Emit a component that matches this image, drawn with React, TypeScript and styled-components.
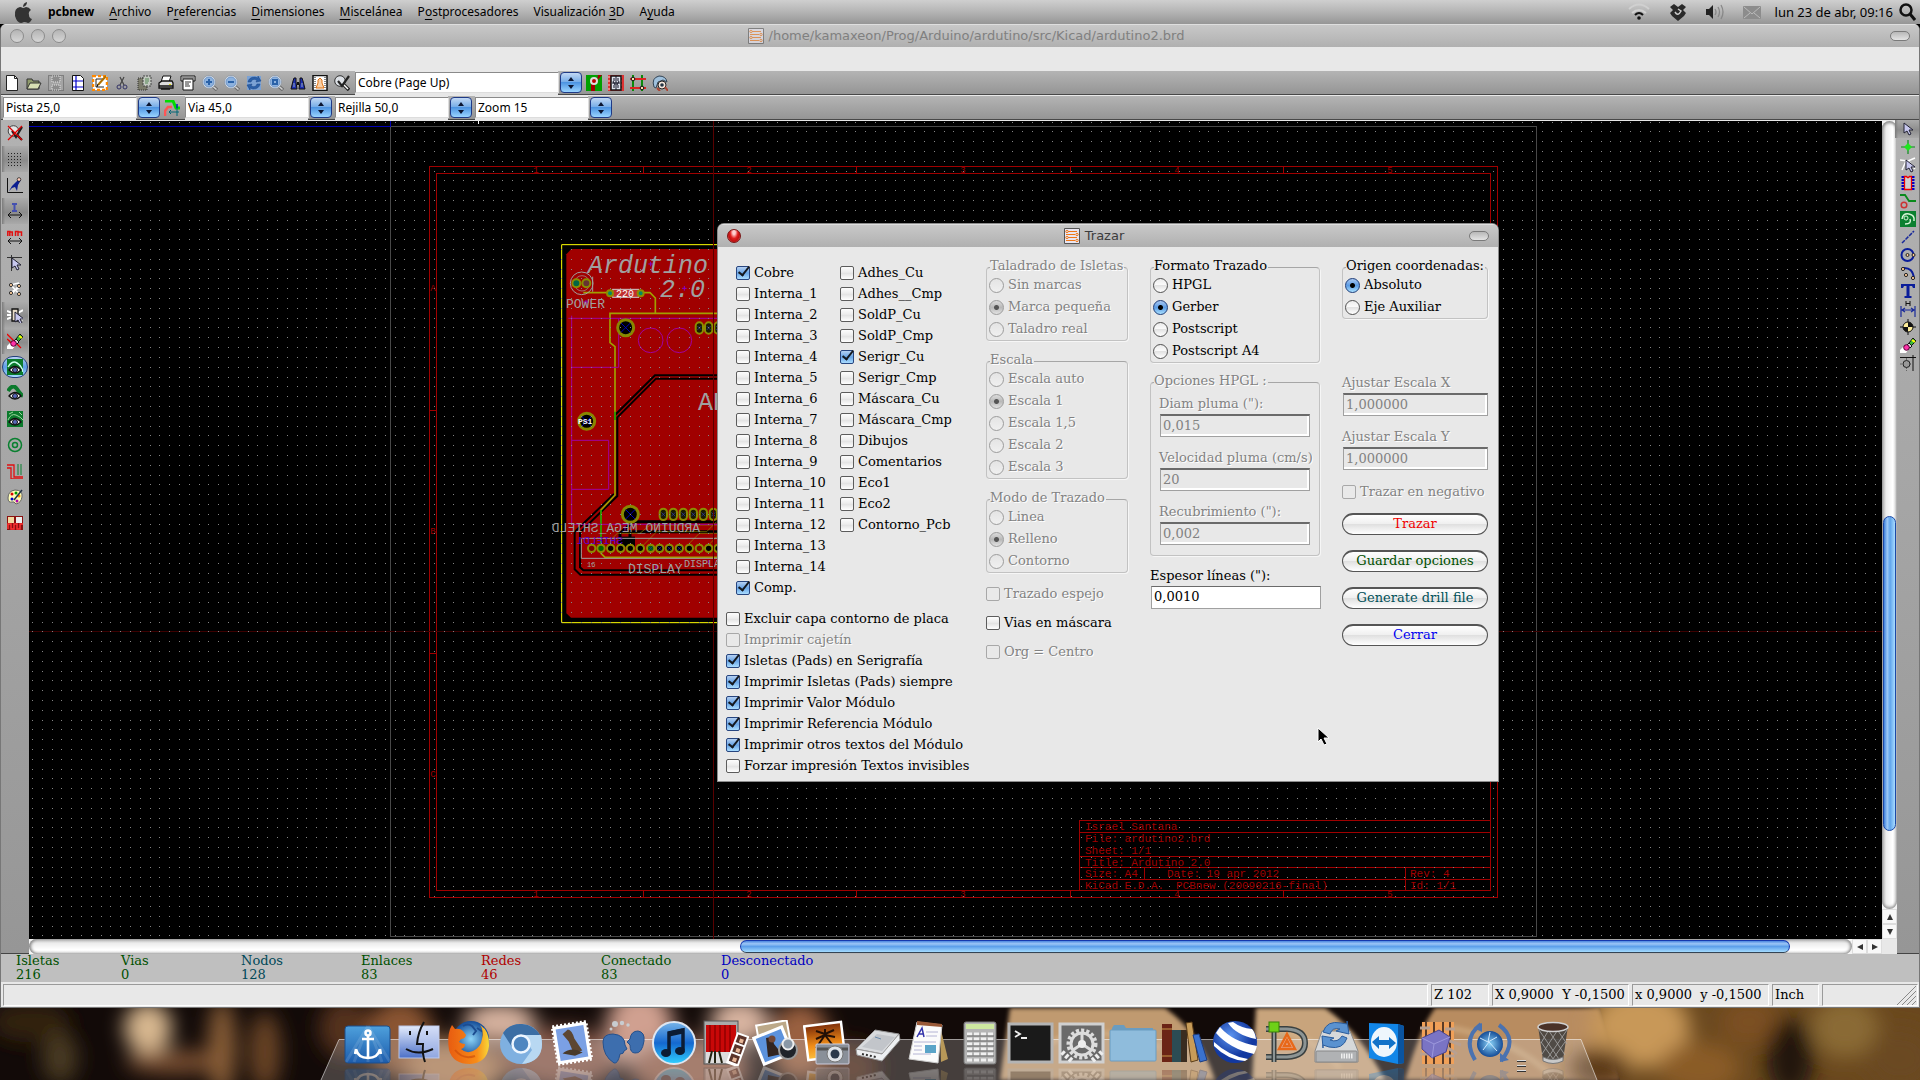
import React from "react";
import styled, { createGlobalStyle, css } from "styled-components";

const sans = `"Noto Sans", "Open Sans", sans-serif`;
const serif = `"DejaVu Serif", "Liberation Serif", serif`;
const mono = `"Liberation Mono", "DejaVu Sans Mono", monospace`;

const GlobalStyle = createGlobalStyle`
  *, *::before, *::after { box-sizing: border-box; }
  body { margin: 0; background: #000; overflow: hidden; }
  button, input, select { font: inherit; color: inherit; margin: 0; }
`;

/* ---------- shell ---------- */

const Desktop = styled.div`
  position: relative;
  display: flex;
  flex-direction: column;
  height: 100vh;
  font: 13px/18px ${sans};
  color: #000;
  overflow: hidden;
`;

const MenuBar = styled.header`
  display: flex;
  align-items: center;
  height: 24px;
  padding: 0 4px 0 13px;
  background: linear-gradient(#cfcfcf, #b4b4b4 50%, #969696);
  font-size: 13px;
`;

const Menus = styled.nav`
  display: flex;
  align-items: center;
  gap: 15px;
  flex: 1;
  margin-left: 15px;
`;

const MenuItem = styled.button<{ $bold?: boolean }>`
  border: 0;
  padding: 0;
  background: none;
  line-height: 20px;
  font-size: 12px;
  font-weight: ${(p) => (p.$bold ? 700 : 400)};
  u { text-underline-offset: 3px; }
`;

const Tray = styled.div`
  display: flex;
  align-items: center;
  gap: 19px;
  line-height: 20px;
`;

const Clock = styled.span`
  margin: 0 -13px 0 -5px;
  font-size: 13px;
`;

const AppWindow = styled.main`
  display: flex;
  flex-direction: column;
  flex: 1;
  min-height: 0;
  background: #e8e8e8;
  border: solid #777;
  border-width: 0 1px 1px;
  border-radius: 6px 6px 0 0;
  overflow: hidden;
`;

const TitleBar = styled.div<{ $active?: boolean }>`
  display: flex;
  align-items: center;
  height: 23px;
  padding: 0 9px;
  border-top: 1px solid #dedede;
  background: linear-gradient(#c8c8c8, #b0b0b0);
  color: ${(p) => (p.$active ? "#3c3c3c" : "#808080")};
`;

const TitleText = styled.h1`
  display: flex;
  align-items: center;
  justify-content: center;
  gap: 5px;
  flex: 1;
  margin: 0;
  font: 13px/18px "DejaVu Sans", sans-serif;
`;

const Lights = styled.div<{ $w: number }>`
  display: flex;
  gap: 7px;
  width: ${(p) => p.$w}px;
`;

const Light = styled.button<{ $red?: boolean }>`
  width: 14px;
  height: 14px;
  padding: 0;
  border: 1px solid ${(p) => (p.$red ? "#7a1414" : "#8c8c8c")};
  border-radius: 50%;
  background: ${(p) =>
    p.$red
      ? "radial-gradient(ellipse at 50% 20%, #ffd0d0 0 15%, #e02020 45%, #c01010 65%, #ff8a8a)"
      : "linear-gradient(#b4b4b4, #d6d6d6)"};
`;

const PillBox = styled.div`
  display: flex;
  justify-content: flex-end;
  width: 60px;
`;

const Pill = styled.button`
  width: 20px;
  height: 10px;
  padding: 0;
  border: 1px solid #7a7a7a;
  border-radius: 5px;
  background: linear-gradient(#b8b8b8, #e4e4e4);
`;

const Strip = styled.div`
  height: 24px;
`;

const ToolRow = styled.div`
  display: flex;
  align-items: center;
  height: 24px;
  background: linear-gradient(#b4b4b4, #959595);
  border-bottom: 1px solid #484848;
  & + & { margin-top: 1px; }
`;

const ToolButton = styled.button`
  display: flex;
  align-items: center;
  justify-content: center;
  width: 22px;
  height: 22px;
  padding: 0;
  border: 0;
  background: none;
`;

const ComboWrap = styled.label<{ $w: number }>`
  display: flex;
  align-items: center;
  width: ${(p) => p.$w}px;
  height: 24px;
  margin-left: 2px;
  background: linear-gradient(to right, #e8e8e8 calc(100% - 25px), transparent 0);
`;

const ComboSelect = styled.select`
  flex: 1;
  min-width: 0;
  height: 21px;
  padding: 0 2px;
  appearance: none;
  border: 1px solid #8a8a8a;
  border-right-color: #ddd;
  border-bottom-color: #ddd;
  border-radius: 0;
  background: #fff;
  font-size: 12px;
`;

const Stepper = styled.span`
  display: flex;
  align-items: center;
  justify-content: center;
  width: 22px;
  height: 21px;
  margin: 0 1px;
  border: 1px solid #1f3a86;
  border-radius: 4px;
  background: linear-gradient(#c2d8f4, #79aee8 45%, #4d94e2 50%, #9ad4ff);
`;

const Workspace = styled.div`
  display: flex;
  flex: 1;
  min-height: 0;
`;

const SideBar = styled.aside<{ $w: number }>`
  display: flex;
  flex-direction: column;
  align-items: center;
  width: ${(p) => p.$w}px;
  background: linear-gradient(#b2b2b2, #969696);
  border-bottom: 1px solid #444;
`;

const SideButton = styled.button<{ $h: number; $state?: "down" | "blue" }>`
  display: flex;
  align-items: center;
  justify-content: center;
  flex: none;
  width: 26px;
  height: ${(p) => p.$h}px;
  padding: 0;
  border: 0;
  background: none;
  ${(p) =>
    p.$state === "down" &&
    css`
      background: linear-gradient(to right, #7c7c7c, transparent 12%),
        linear-gradient(#ababab, #8c8c8c 55%, #a9a9a9);
    `}
  ${(p) =>
    p.$state === "blue" &&
    css`
      height: 22px;
      margin: 2px 0;
      border: 1px solid #24407c;
      border-radius: 11px;
      background: linear-gradient(#b9d4f5, #5c9ee6 50%, #a5dcff);
    `}
`;

const Center = styled.section`
  display: flex;
  flex-direction: column;
  flex: 1;
  min-width: 0;
  padding-top: 1px;
`;

const Row = styled.div<{ $grow?: boolean }>`
  display: flex;
  flex: ${(p) => (p.$grow ? 1 : "none")};
  min-height: 0;
`;

const Canvas = styled.div`
  display: flex;
  flex: 1;
  min-width: 0;
  background: #000;
  overflow: hidden;
  svg { flex: 1; min-width: 0; display: block; }
`;

const VBar = styled.div`
  display: flex;
  flex-direction: column;
  width: 15px;
  background: #f4f4f4;
`;

const VTrack = styled.div`
  display: grid;
  grid-template-rows: 394fr 315fr 78fr;
  flex: 1;
  padding: 0 1px;
  border-radius: 8px;
  background: linear-gradient(to right, #b8b8b8, #ededed 30%, #fff 70%, #ddd);
  box-shadow: inset 0 2px 3px #888, inset 0 -2px 3px #999;
`;

const VThumb = styled.div`
  grid-row: 2;
  border: 1px solid #1b49a8;
  border-radius: 7px;
  background: linear-gradient(to right, #3d7fdc, #9cc9f8 30%, #5fa4ec 55%, #a8dcff);
`;

const HBar = styled.div`
  display: flex;
  flex: 1;
  height: 15px;
  background: #f4f4f4;
`;

const HTrack = styled.div`
  display: grid;
  grid-template-columns: 710fr 1049fr 62fr;
  flex: 1;
  padding: 1px 0;
  border-radius: 8px;
  background: linear-gradient(#c2c2c2, #ededed 30%, #fff 70%, #eee);
  box-shadow: inset 2px 0 3px #888, inset -2px 0 3px #999;
`;

const HThumb = styled.div`
  grid-column: 2;
  border: 1px solid #1639ae;
  border-bottom-color: #345;
  border-radius: 7px;
  background: linear-gradient(#4b86e0, #9cc6f6 25%, #5d9fea 50%, #a3dbff);
`;

const ArrowButton = styled.button`
  display: flex;
  align-items: center;
  justify-content: center;
  width: 15px;
  height: 15px;
  padding: 0;
  border: 1px solid #ddd;
  background: #f8f8f8;
`;

const Corner = styled.div`
  width: 15px;
  background: #e8e8e8;
`;

const Stats = styled.dl`
  display: grid;
  grid-template-columns: 105px repeat(6, 120px);
  height: 28px;
  margin: 0;
  padding-left: 15px;
  background: #bfbfbf;
  font: 13px/14px ${serif};
`;

const Stat = styled.div<{ $c: string }>`
  color: ${(p) => p.$c};
  dt, dd { margin: 0; }
`;

const StatusBar = styled.footer`
  display: flex;
  gap: 3px;
  height: 25px;
  padding: 2px 1px 1px 2px;
  font: 13px/20px ${serif};
`;

const StatusField = styled.div<{ $w?: number }>`
  display: flex;
  justify-content: space-between;
  ${(p) => (p.$w ? `width: ${p.$w}px;` : "flex: 1;")}
  padding-left: 2px;
  border: 1px solid #9a9a9a;
  border-right-color: #fff;
  border-bottom-color: #fff;
  white-space: pre;
`;

/* ---------- dialog ---------- */

const Dialog = styled.section`
  position: absolute;
  left: 718px;
  top: 224px;
  width: 780px;
  background: #e8e8e8;
  border-radius: 6px 6px 0 0;
  overflow: hidden;
  box-shadow: 0 0 0 1px #8c8c8c;
  font: 13px/18px ${serif};
`;

const DialogBody = styled.form`
  display: grid;
  grid-template-columns: 260px 164px 192px 146px;
  padding: 13px 0 5px 8px;
`;

const Column = styled.div<{ $top?: number }>`
  padding-top: ${(p) => p.$top ?? 0}px;
`;

const Layers = styled.div`
  display: grid;
  grid-template-columns: 104px 1fr;
  padding-left: 10px;
  margin-bottom: 10px;
`;

const Option = styled.label<{ $off?: boolean; $h: number }>`
  display: flex;
  align-items: center;
  gap: 4px;
  height: ${(p) => p.$h}px;
  white-space: nowrap;
  ${(p) => p.$off && "color: #828282; text-shadow: 1px 1px 0 #fff;"}
`;

const Check = styled.input`
  position: relative;
  flex: none;
  appearance: none;
  width: 14px;
  height: 14px;
  border: 1px solid #5c5c5c;
  border-radius: 2px;
  background: linear-gradient(#fdfdfd, #ececec 45%, #e2e2e2 50%, #fff);
  &:disabled { border-color: #a8a8a8; background: #e9e9e9; }
  &:checked {
    border-color: #27457f;
    background: linear-gradient(#b5d0f2, #68a4e6 50%, #a9dcff);
  }
  &:checked::after {
    content: "";
    position: absolute;
    left: 4px;
    top: -3px;
    width: 6px;
    height: 12px;
    border: solid #14181f;
    border-width: 0 2px 2px 0;
    transform: rotate(38deg);
  }
`;

const Radio = styled.input`
  flex: none;
  appearance: none;
  width: 15px;
  height: 15px;
  border: 1px solid #505050;
  border-radius: 50%;
  background: linear-gradient(#ececec, #fafafa 45%, #e2e2e2 50%, #fff);
  &:checked {
    border-color: #1d3c78;
    background: radial-gradient(circle, #000 0 2px, transparent 3px),
      linear-gradient(#a9c8f2, #5c9ce4 50%, #a9e0ff);
  }
  &:disabled { border-color: #9c9c9c; background: linear-gradient(#e4e4e4, #f0f0f0); }
  &:disabled:checked {
    background: radial-gradient(circle, #555 0 2px, transparent 3px),
      linear-gradient(#dcdcdc, #b8b8b8 50%, #e2e2e2);
  }
`;

const Group = styled.fieldset<{ $w: number; $off?: boolean; $gap?: number }>`
  min-width: 0;
  width: ${(p) => p.$w}px;
  margin: 0 0 ${(p) => p.$gap ?? 12}px;
  padding: 0 0 0 2px;
  border: 1px solid #c2c2c2;
  border-top-color: #a6a6a6;
  border-radius: 4px;
  box-shadow: 1px 1px 0 #f6f6f6;
  legend {
    margin-left: 1px;
    padding: 0 1px 2px 0;
    line-height: 12px;
    white-space: nowrap;
    ${(p) => p.$off && "color: #828282; text-shadow: 1px 1px 0 #fff;"}
  }
`;

const FieldStack = styled.div<{ $pad?: boolean }>`
  display: flex;
  flex-direction: column;
  gap: 12px;
  ${(p) => p.$pad && "padding: 6px 0 10px 6px;"}
`;

const Field = styled.label<{ $off?: boolean; $w: number }>`
  display: flex;
  flex-direction: column;
  gap: 1px;
  white-space: nowrap;
  ${(p) => p.$off && "color: #828282; text-shadow: 1px 1px 0 #fff;"}
  input {
    width: ${(p) => p.$w}px;
    height: 23px;
    margin-left: 1px;
    padding: 0 2px 2px;
    border: 1px solid #a0a0a0;
    border-top-color: #6a6a6a;
    border-radius: 0;
    background: #fff;
  }
  input:disabled {
    color: #828282;
    background: #e8e8e8;
    border-top-width: 2px;
    box-shadow: inset -2px -2px 0 #fff;
  }
`;

const Actions = styled.div`
  display: flex;
  flex-direction: column;
  gap: 15px;
  margin-top: 11px;
`;

const Push = styled.button<{ $c: string }>`
  height: 22px;
  padding: 0 0 2px;
  border: 1px solid #555;
  border-top-width: 2px;
  border-radius: 11px;
  background: linear-gradient(#fff, #f0f0f0 45%, #e0e0e0 50%, #fff);
  color: ${(p) => p.$c};
  line-height: 16px;
`;

const Pointer = styled.svg`
  position: absolute;
  left: 1317px;
  top: 727px;
  width: 13px;
  height: 20px;
`;

/* ---------- dock ---------- */

const DockArea = styled.div`
  display: grid;
  height: 72px;
  overflow: hidden;
  > * { grid-area: 1 / 1; }
`;

const Scene = styled.svg`
  display: block;
  width: 100%;
  height: 72px;
`;

const DockRow = styled.div`
  display: flex;
  justify-content: center;
  gap: 3px;
  padding-top: 12px;
  z-index: 1;
`;

const DockItem = styled.button`
  width: 48px;
  height: 46px;
  padding: 0;
  border: 0;
  background: none;
  -webkit-box-reflect: below 0 linear-gradient(transparent, rgba(0, 0, 0, 0.35));
  svg { display: block; }
`;

const DockGap = styled.div`
  width: 9px;
  padding-top: 40px;
  display: flex;
  flex-direction: column;
  gap: 4px;
  i { height: 1px; background: #ddd; box-shadow: 0 1px #333; }
`;

/* ---------- icons ---------- */

const Ic = ({ children, s = 16 }: { children: React.ReactNode; s?: number }) => (
  <svg width={s} height={s} viewBox="0 0 16 16" fill="none" aria-hidden="true">{children}</svg>
);

const Magnifier = ({ sign }: { sign: string }) => (
  <Ic>
    <path d="M10.500 11l4.500 4" stroke="#6c6c6c" strokeWidth="3.500" />
    <path d="M10.500 11l4 3.500" stroke="#d4d4d4" strokeWidth="1.500" />
    <circle cx="7" cy="7" r="6.500" fill="#dfe6ee" stroke="#8b95a1" strokeWidth=".8" />
    <circle cx="7" cy="7" r="5" fill="#8db2de" stroke="#6c94c8" />
    <path d={sign} stroke="#2a62a8" strokeWidth="2" />
  </Ic>
);

const Eye = () => (
  <>
    <path d="M2 11q6-7 12 0q-6 6-12 0z" fill="#fff" stroke="#111" strokeWidth="1.300" />
    <circle cx="8" cy="11" r="2.500" fill="#5a68b8" stroke="#111" />
  </>
);

const Eraser = () => (
  <>
    <path d="M0 16v-3l3-3h3l2 3-2 3z" fill="#fff" />
    <path d="M9 6l4-5 3 3-5 5z" fill="#38b838" stroke="#111" />
    <path d="M12 3l3 2" stroke="#ff0" strokeWidth="2" />
    <path d="M7 8l2-2 3 3-2 2z" fill="#ddd" stroke="#111" />
    <circle cx="6.500" cy="10.500" r="2.800" fill="#f3a" stroke="#503" />
  </>
);

const Arrow = ({ x = 0, y = 0 }) => (
  <path transform={`translate(${x} ${y})`} d="M0 0v10l3-2 2 4 2-1-2-4h4z" fill="#c8c8ee" stroke="#223" strokeWidth="1" />
);

const mainIcons: [string, React.ReactNode][] = [
  ["Nuevo", <Ic><path d="M2.500.5h8l3 3v12h-11z" fill="#fff" stroke="#222" /><path d="M10.500.5v3h3" stroke="#222" /></Ic>],
  ["Abrir", <Ic><path d="M1 4h5l1 2h6v8H1z" fill="#8f9a6c" stroke="#333" /><path d="M1 14l3-6h11l-3 6z" fill="#d9e0b4" stroke="#333" /></Ic>],
  ["Guardar", <Ic><path d="M.5.5h15v15H.5z" fill="#a4a4a4" stroke="#555" strokeDasharray="1 1" /><path d="M4 1h8v6H4zM4 10h8v5H4z" fill="#8c8c8c" stroke="#e4e4e4" strokeDasharray="1 1" /></Ic>],
  ["Ajustes de página", <Ic><path d="M2.500.5h8l3 3v12h-11z" fill="#fff" stroke="#111" /><path d="M6 1v14M3 6h10M3 12h10" stroke="#00c" strokeWidth="1.200" /></Ic>],
  ["Editor de módulos", <Ic><path d="M1 1h14v14H1z" fill="#fff" stroke="#f80" strokeWidth="2.500" strokeDasharray="3 2" /><path d="M4 4h7M4 4v8h8" stroke="#222" /><path d="M6 10l8-9" stroke="#b07000" strokeWidth="2" /><path d="M5 12l1-3" stroke="#111" /></Ic>],
  ["Cortar", <Ic><path d="M6 2l4 8M10 2L6 10" stroke="#444" strokeWidth="1.200" /><circle cx="5" cy="12" r="2" stroke="#336" /><circle cx="11" cy="12" r="2" stroke="#336" /></Ic>],
  ["Pegar", <Ic><path d="M2 3h9v12H2z" fill="#7b7b6b" stroke="#333" strokeDasharray="1 1" /><path d="M7 1h8v10H7z" fill="#c2c8c0" stroke="#444" strokeDasharray="2 1" /><path d="M9 4h4M9 6h4M9 8h3" stroke="#585" /></Ic>],
  ["Imprimir", <Ic><path d="M5 1h8l-2 6H3z" fill="#fff" stroke="#111" /><path d="M1 8l3-2h10l1 2v5H1z" fill="#ddd" stroke="#111" strokeWidth="1.300" /><path d="M1 11h14M3 14h9" stroke="#111" strokeWidth="1.500" /><path d="M11 9.500h2" stroke="#dd0" /></Ic>],
  ["Trazar", <Ic><path d="M1 1h14v5H1z" fill="#eee" stroke="#111" /><path d="M3 4h10v11H3z" fill="#fff" stroke="#111" /><path d="M5 7h6M5 9h4M5 11h5M2 3h12" stroke="#333" /></Ic>],
  ["Acercar", <Magnifier sign="M7 4v6M4 7h6" />],
  ["Alejar", <Magnifier sign="M4 7h6" />],
  ["Redibujar", <Ic><path d="M1 1h14v14H1z" fill="#7ba2d4" /><path d="M2 7q1-5 7-5l3 1V1l3 5-5 1 1-2q-5-2-6 2zM14 9q-1 5-7 5l-3-1v2L1 10l5-1-1 2q5 2 6-2z" fill="#2b60a8" stroke="#1b4484" strokeWidth=".5" /></Ic>],
  ["Ajustar zoom", <Magnifier sign="M5 5h4v4H5z" />],
  ["Buscar", <Ic><path d="M4 3h2v4l1 7H1l2-8zM10 3h2l1 3 2 8H9l1-7z" fill="#1d2fb0" stroke="#111" /><path d="M7 7h2v3H7z" fill="#111" /><path d="M4 8v4M12 8v4" stroke="#9ab" /></Ic>],
  ["Netlist", <Ic><path d="M1 .5h14v15H1z" fill="#fff" stroke="#111" strokeWidth="1.500" /><path d="M3 2v12M13 2v12" stroke="#111" strokeDasharray="1 1" /><path d="M8 3l2 2v3l2 5H4l2-5V5z" fill="#f8d0a8" stroke="#e07010" /></Ic>],
  ["DRC", <Ic><circle cx="6" cy="6" r="5.300" fill="#dde1e6" stroke="#333" /><path d="M10 10l5 5" stroke="#222" strokeWidth="3.500" /><path d="M10 10l4 4" stroke="#fff" strokeWidth="1.500" /><path d="M4 6l4 5 7-10" stroke="#222" strokeWidth="2.200" /></Ic>],
];

const modeIcons: [string, React.ReactNode][] = [
  ["Modo pista", <Ic><path d="M0 0h16v16H0z" fill="#00a000" /><path d="M5 9h4v7H5zM12 0h4l-5 6z" fill="#a00000" /><circle cx="8" cy="6" r="3" fill="#b00" stroke="#ddd" strokeWidth="2" /></Ic>],
  ["Modo módulo", <Ic><path d="M0 0h16v16H0z" fill="#d33" /><path d="M0 2h16M0 6h16M0 10h16M0 14h16" stroke="#fcc" strokeDasharray="2 2" /><path d="M3 1h10v14H3z" fill="#dfe3ee" stroke="#111" strokeWidth="1.500" /><path d="M8 1v14M4 8h8M6 3v3M10 3v3M6 10v3M10 10v3M5 6l2 4M11 6l-2 4" stroke="#112" /></Ic>],
  ["Autorutado", <Ic><path d="M3 0v16M12 0v16" stroke="#0a8a0a" strokeWidth="2" /><path d="M0 4h16M0 13h16" stroke="#d22" strokeWidth="2" /><circle cx="3" cy="4" r="1.800" fill="#fda" stroke="#111" /><circle cx="12" cy="13" r="1.800" fill="#fda" stroke="#111" /></Ic>],
  ["Ayuda en red", <Ic><path d="M2 12Q-1 3 7 1q7 0 8 6l-4-2-5 2-2 6z" fill="#9fc0dc" stroke="#345" /><circle cx="10" cy="10" r="4" fill="#f4e6dc" stroke="#222" /><circle cx="10" cy="10" r="1.800" fill="#234" /><path d="M13 12l3 4M5 13l3 3" stroke="#a43" strokeWidth="2" /></Ic>],
];

const TrackIcon = () => (
  <Ic><path d="M1 1h8l3 7h4" stroke="#0d0" strokeWidth="3" /><path d="M1 16v-5l3-4h4" stroke="#f55" strokeWidth="2.500" /><path d="M5 12h10M5 12l2-2M5 12l2 2M13 4v12" stroke="#067" /><path d="M13 4v4" stroke="#00c" /></Ic>
);

type Side = [string, React.ReactNode, ("down" | "blue")?];

const leftIcons: Side[] = [
  ["DRC desactivado", <Ic><circle cx="6.500" cy="6" r="5.300" fill="#e4e4e4" stroke="#444" /><path d="M5 6l4 6 6-10M10 10l5 5" stroke="#222" strokeWidth="2.200" /><path d="M1 1l14 14M15 1L1 15" stroke="#d00" strokeWidth="1.300" /></Ic>],
  ["Rejilla", <Ic>{[2, 5, 8, 11, 14].map((y) => <path key={y} d={`M1 ${y + 0.5}h15`} stroke="#222" strokeDasharray="1 2" />)}</Ic>, "down"],
  ["Coordenadas polares", <Ic><path d="M.5 1v14.500H16" stroke="#111" /><path d="M2 14l3-5 4-4 3-3 2 1-3 5-1 6-2-4-3 1z" fill="#0a1d90" /><circle cx="12" cy="2.500" r="1.800" fill="#fcb" stroke="#111" strokeWidth=".7" /></Ic>],
  ["Pulgadas", <Ic><path d="M5 1h5M5 8h5M7.500 1v7" stroke="#4450b0" strokeWidth="2" /><path d="M1 12h14M4 9l-3 3 3 3M12 9l3 3-3 3" stroke="#111" /></Ic>, "down"],
  ["Milímetros", <Ic><path d="M.8 7V2.500h2V7M2.800 3h2.500v4M8.500 7V2.500h2.500V7M11 3h3.500v4" stroke="#e01010" strokeWidth="1.500" /><path d="M1 12h14M4 9l-3 3 3 3M12 9l3 3-3 3" stroke="#111" /></Ic>],
  ["Cursor", <Ic><path d="M0 2.500h15M4.500 0v16" stroke="#333" /><Arrow x={5} y={3} /></Ic>],
  ["Red de conexiones", <Ic><path d="M3 4l9-2M4 4l8 9M13 3L5 13M3 12l10-6" stroke="#fff" strokeWidth="1.500" />{[[4, 4], [12, 5], [4, 12], [12, 13]].map(([x, y]) => <circle key={`${x}${y}`} cx={x} cy={y} r="1.600" fill="#fc9" stroke="#333" />)}</Ic>],
  ["Red del módulo", <Ic><path d="M0 4l5 2M0 8h5M0 12l5-2M16 3l-5 3M16 13l-5-3" stroke="#fff" strokeWidth="2" /><path d="M5 2h6v12H5z" fill="#e8dcc8" stroke="#111" strokeWidth="1.300" /><Arrow x={8} y={5} /></Ic>, "down"],
  ["Borrado automático", <Ic><path d="M0 1l14 14M0 6q5 3 6 10" stroke="#e00" strokeWidth="1.300" /><Eraser /></Ic>, "down"],
  ["Mostrar zonas", <Ic><path d="M0 0h16v16H0z" fill="#0b7a2c" /><path d="M1 8Q5 1 10 4t6 9" stroke="#cfe" strokeWidth="1.500" /><Eye /></Ic>, "blue"],
  ["Ocultar zonas", <Ic><path d="M1 6Q6-2 10 4t6 7" stroke="#0b7a2c" strokeWidth="4" /><Eye /></Ic>],
  ["Contorno de zonas", <Ic><path d="M0 0h16v16H0z" fill="#0b7a2c" /><path d="M1 9Q4 2 9 4t7 5M2 3l4-2M12 1l3 3" stroke="#9ed8a0" /><Eye /></Ic>],
  ["Pads en contorno", <Ic><circle cx="8" cy="8" r="6.500" stroke="#0a8030" strokeWidth="1.500" /><circle cx="8" cy="8" r="2.500" stroke="#0a8030" strokeWidth="1.500" /></Ic>],
  ["Pistas en contorno", <Ic><path d="M0 2h7v12h9M0 5h4v11h12" stroke="#e01010" strokeWidth="1.300" /><path d="M11 1v11M14 1v11" stroke="#0a8030" /></Ic>],
  ["Alto contraste", <Ic><path d="M8 1q8 0 7 7-1 6-6 7-2-3-4-2-4 1-4-4 0-7 7-8z" fill="#ffffb8" stroke="#666" />{[["#d00", 5, 5], ["#090", 9, 4], ["#00c", 5, 10], ["#a0a", 10, 12], ["#f80", 12, 7]].map(([c, x, y]) => <circle key={c as string} cx={x} cy={y} r="1.500" fill={c as string} />)}<path d="M15 1L7 11" stroke="#234" strokeWidth="1.500" /></Ic>],
  ["Microondas", <Ic><path d="M0 1h16v14H0z" fill="#8a1010" /><path d="M1 2h6v6H1z" fill="#f4d8a0" /><path d="M9 2h6v6H9z" fill="#eee" /><path d="M1 14V9h3v5h3V9h3v5h3V9h3" stroke="#f33" strokeWidth="1.500" /></Ic>],
];

const rightIcons: Side[] = [
  ["Seleccionar", <Ic><Arrow x={4} y={2} /></Ic>, "down"],
  ["Resaltar red", <Ic><path d="M8 1v14M1 8h14" stroke="#0b8a1b" strokeWidth="1.200" /><path d="M8 4l4 4-4 4-4-4z" fill="#1fe61f" /></Ic>],
  ["Red local", <Ic><path d="M0 3l8 1 7-3M6 4L2 13M8 4l7 8" stroke="#fff" strokeWidth="1.500" /><Arrow x={6} y={3} /></Ic>],
  ["Añadir módulo", <Ic><path d="M3 1v14M13 1v14" stroke="#00c" strokeWidth="3" strokeDasharray="2 1" /><path d="M4.500 1.500h2l1 1h1l1-1h2v13h-7z" fill="#d0d0d0" stroke="#e00" strokeWidth="1.300" /></Ic>],
  ["Añadir pista", <Ic><path d="M0 2h5l4 6h7" stroke="#0a8a1b" strokeWidth="1.800" /><circle cx="4" cy="12" r="2.800" stroke="#c33" strokeWidth="1.500" /></Ic>],
  ["Añadir zona", <Ic><path d="M0 0h16v16H0z" fill="#0b8030" /><path d="M2 8q1-6 7-5t5 7M5 13q7 0 5-5" stroke="#d8f4d8" strokeWidth="1.500" /><circle cx="6" cy="7" r="2" stroke="#d8f4d8" /></Ic>],
  ["Añadir línea", <Ic><path d="M2 14L14 2" stroke="#1a2a9a" strokeWidth="1.500" strokeDasharray="4 1" /></Ic>],
  ["Añadir círculo", <Ic><circle cx="7.500" cy="8" r="6" stroke="#0a1d9a" strokeWidth="2" /><circle cx="7.500" cy="8" r="1.500" fill="#fc9" stroke="#222" /><circle cx="13.500" cy="8" r="1.500" fill="#fc9" stroke="#222" /></Ic>],
  ["Añadir arco", <Ic><path d="M3 3q10-1 11 11" stroke="#0a1d9a" strokeWidth="2" /><circle cx="3" cy="4" r="1.600" fill="#fc9" stroke="#222" /><circle cx="6" cy="10" r="1.600" fill="#fc9" stroke="#222" /><circle cx="13" cy="13" r="1.600" fill="#fc9" stroke="#222" /></Ic>],
  ["Añadir texto", <Ic><path d="M1 1h14v4h-2l-1-2H9.500v10h2v2h-7v-2h2V3H4L3 5H1z" fill="#0a1d9a" /></Ic>],
  ["Añadir cota", <Ic><path d="M1 5v11M15 5v11M2 9h12M5 7L2 9l3 2M11 7l3 2-3 2" stroke="#1a2a9a" strokeWidth="1.200" /><path d="M6 0v5M10 0v5M6 2.500h4" stroke="#111" /></Ic>],
  ["Añadir mira", <Ic><path d="M8 0v16M0 8h16" stroke="#111" /><circle cx="8" cy="8" r="5" fill="#fe9" stroke="#111" /><path d="M8 3a5 5 0 015 5H8zM8 13a5 5 0 01-5-5h5z" fill="#111" /></Ic>],
  ["Borrar", <Ic><Eraser /></Ic>],
  ["Desplazar origen", <Ic><path d="M0 2.500h16M13 0v16" stroke="#111" /><path d="M6.500 3v13M0 9h12" stroke="#666" strokeDasharray="2 1" /><circle cx="6.500" cy="9" r="3.500" fill="#999" stroke="#222" /></Ic>],
];

const PcbIcon = ({ faded }: { faded?: boolean }) => (
  <svg width="16" height="16" viewBox="0 0 16 16" fill="none" opacity={faded ? 0.6 : 1} aria-hidden="true">
    <path d="M.5.5h15v15H.5z" fill="#e9e6f2" stroke="#555" />
    <path d="M4 3.500h9M2 6.500h9M4 9.500h9M2 12.500h9" stroke="#f07818" />
    <circle cx="3" cy="3.500" r="1.200" stroke="#f07818" /><circle cx="13" cy="6.500" r="1.200" stroke="#f07818" />
    <circle cx="3" cy="9.500" r="1.200" stroke="#f07818" /><circle cx="13" cy="12.500" r="1.200" stroke="#f07818" />
  </svg>
);

/* ---------- board drawing ---------- */

const gridPath = (() => {
  let d = "";
  for (let j = 0; j < 84; j++) {
    const y = Math.round(1 + 9.804 * j - 0.4);
    for (let i = 0; i < 200; i++) d += `M${Math.round(2.9 + 9.804 * i)} ${y}h1v1h-1z`;
  }
  return d;
})();

const Hole = ({ x, y }: { x: number; y: number }) => (
  <g>
    <circle cx={x} cy={y} r="24" fill="#000" stroke="#888800" strokeWidth="9" />
    <path d={`M${x - 14} ${y - 14}l28 28M${x + 14} ${y - 14}l-28 28`} stroke="#0000b8" strokeWidth="3" />
  </g>
);

const Slot = ({ x, y }: { x: number; y: number }) => (
  <g>
    <rect x={x - 11} y={y - 17} width="22" height="34" rx="11" fill="#1a1a00" stroke="#8c8c00" strokeWidth="6" />
    <path d={`M${x - 6} ${y - 6}l12 12M${x + 6} ${y - 6}l-12 12`} stroke="#2a40b0" strokeWidth="2" />
  </g>
);

const board = "#a00000";
const silk = "#a0a0a0";

function Board() {
  return (
    <svg role="img" aria-label="Placa">
      {/* shift so that window coordinates can be used inside */}
      <g transform="translate(-29 -121)">
        <g shapeRendering="crispEdges" fill="none">
          <path d="M390.500 126.500H1536.500V936H390.500z" stroke="#484848" />
          <path d="M29 126.500H390.500V121" stroke="#0000b4" />
          <path d="M478.500 121v3" stroke="#fff" />
        </g>
        <g transform="translate(540 220) scale(.33333)" fill="none">
          <path d="M600 74H65V1208H600" stroke="#ff0" strokeWidth="3" />
          <path d="M600 87H94L79 103V1180L93 1193H600z" fill={board} />
          <path d="M600 466H345L225 585M600 476H348L232 592V828L120 937V1042l10 9H600M222 822L104 936V1048L121 1064H600" stroke="#000" strokeWidth="6" />
          <path d="M240 985V935H600V905H280L240 940M270 985V930" stroke="#000" strokeWidth="9" />
          <path d="M240 950h45v30h-45z" fill="#000" />
          <path d="M130 218H210M305 218h25l16 16v46M600 280H210V368l15 12V825L183 870V1000l12 12H600" stroke="#a0a000" strokeWidth="5" />
          <path d="M183 870v105M225 575v25" stroke="#009800" strokeWidth="4" />
          <path d="M212 985V960L232 940H300L330 915H600M301 985L350 935H500L530 905M448 970L478 940H600M506 975L530 950" stroke="#909000" strokeWidth="2" />
          <path d="M85 295H600M95 287V913M236 295V442H95M95 661H206V808H95M95 913H600" stroke="#a000a0" strokeWidth="3" />
          <circle cx="332" cy="361" r="37" stroke="#a000a0" strokeWidth="3" />
          <circle cx="418" cy="361" r="37" stroke="#a000a0" strokeWidth="3" />
          <Hole x={257} y={323} />
          <Hole x={271} y={883} />
          <Hole x={140} y={604} />
          {[370, 400, 430, 460, 490, 520].map((x) => <Slot key={x} x={x} y={883} />)}
          {[478, 506, 534].map((x) => <Slot key={x} x={x} y={324} />)}
          <path d="M600 955H124V1015H600" stroke={silk} strokeWidth="3" />
          {[155, 183, 212, 242, 271, 301, 332, 359, 388, 418, 448, 478, 506, 534].map((x, i) => (
            <g key={x}>
              <circle cx={x} cy="985" r="11" fill={i === 0 || i === 11 ? "#700" : i % 5 === 1 ? "#060" : "#000"} stroke="#8c8c00" strokeWidth="6" />
              {i > 5 && i < 10 && <path d={`M${x - 6} 979l12 12M${x + 6} 979l-12 12`} stroke="#22a" strokeWidth="2" />}
            </g>
          ))}
          <rect x="218" y="208" width="78" height="24" fill="#c03030" stroke="#ccc" strokeWidth="3" />
          <circle cx="210" cy="220" r="9" fill="#086" stroke="#8c8c00" strokeWidth="6" />
          <circle cx="302" cy="220" r="9" fill="#086" stroke="#8c8c00" strokeWidth="6" />
          <circle cx="125" cy="190" r="34" stroke={silk} strokeWidth="3" />
          <circle cx="126" cy="190" r="23" stroke={silk} strokeWidth="2" />
          <path d="M158 170V215" stroke={silk} strokeWidth="3" />
          <circle cx="109" cy="190" r="12" fill="#064" stroke="#8c8c00" strokeWidth="6" />
          <circle cx="139" cy="190" r="12" fill="#633" stroke="#8c8c00" strokeWidth="6" />
          <path d="M332 125v14M325 132h14M433 198v14M426 205h14M138 240v16M130 246h16M255 918v14M505 1020v14M348 1035v14" stroke="#80c" strokeWidth="3" />
        </g>
        <g fontFamily={mono} fill={silk}>
          <text x="588" y="273" fontSize="25" fontStyle="italic">Ardutino</text>
          <text x="660" y="297" fontSize="25" fontStyle="italic">2.0</text>
          <text x="566" y="308" fontSize="13">POWER</text>
          <text x="698" y="410" fontSize="25">AR</text>
          <text x="628" y="573" fontSize="13">DISPLAY</text>
          <text x="684" y="567" fontSize="10">DISPLA</text>
          <text x="587" y="567" fontSize="7">16</text>
          <text x="616" y="297" fontSize="10" fill="#fff">220</text>
          <text x="578" y="424" fontSize="8" fontWeight="700" fill="#fff">PS1</text>
          <text x="-700" y="532" fontSize="13" transform="scale(-1 1)">ARDUINO_MEGA_SHIELD</text>
          <text x="-623" y="544" fontSize="11" fill="#5a00c8" transform="scale(-1 1)">SHIELD1</text>
        </g>
        <g stroke={board} fill="none" shapeRendering="crispEdges">
          <path d="M429.500 166.500H1497.500V897.500H429.500zM436.500 173.500H1490.500V890.500H436.500z" />
          {[643.5, 856.5, 1070.5, 1283.5].map((x) => <path key={x} d={`M${x} 166v7M${x} 890v7`} />)}
          {[410.5, 653.5].map((y) => <path key={y} d={`M429 ${y}h7M1490 ${y}h7`} />)}
          <path d="M1079.500 890V820.500H1490M1080 832.500h410M1080 856.500h410M1080 867.500h410M1080 879.500h410M1144.500 867v12M1405.500 867v23" />
          <path d="M713.500 121V939" stroke="#5a0000" />
          <path d="M29 631.500H1882" stroke="#3c0000" />
        </g>
        <g fontFamily={mono} fontSize="11" fill={board}>
          <text x="1085" y="830">Israel Santana</text>
          <text x="1085" y="842">File: ardutino2.brd</text>
          <text x="1085" y="854">Sheet: 1/1</text>
          <text x="1085" y="866">Title: Ardutino 2.0</text>
          <text x="1085" y="877">Size: A4</text>
          <text x="1167" y="877">Date: 19 apr 2012</text>
          <text x="1410" y="877">Rev: 4</text>
          <text x="1085" y="889">KiCad E.D.A.</text>
          <text x="1176" y="889">PCBnew (20090216-final)</text>
          <text x="1410" y="889">Id: 1/1</text>
        </g>
        <g fontFamily={mono} fontSize="9" fill={board} textAnchor="middle">
          {[536, 749, 963, 1177, 1390].map((x, i) => (
            <React.Fragment key={x}>
              <text x={x} y="173">{i + 1}</text>
              <text x={x} y="897">{i + 1}</text>
            </React.Fragment>
          ))}
          {["A", "B", "C"].map((l, i) => (
            <React.Fragment key={l}>
              <text x="433" y={291 + 243 * i}>{l}</text>
              <text x="1494" y={291 + 243 * i}>{l}</text>
            </React.Fragment>
          ))}
        </g>
      </g>
      <path d={gridPath} fill="#848484" shapeRendering="crispEdges" />
    </svg>
  );
}

/* ---------- dock artwork ---------- */

const DockSvg = ({ children }: { children: React.ReactNode }) => (
  <svg width="48" height="46" viewBox="0 0 48 46" fill="none" aria-hidden="true">{children}</svg>
);

const dockIcons: [string, React.ReactNode][] = [
  ["Docky", <><rect x="1" y="6" width="45" height="37" rx="3" fill="url(#blueBox)" stroke="#1c4f8c" /><path d="M24 6L2 42M24 6l22 36M24 6L10 42M24 6l14 36M24 6v36" stroke="#fff" opacity=".12" strokeWidth="3" /><g stroke="#fff" strokeWidth="2.500"><circle cx="24" cy="13" r="2.500" /><path d="M24 16v22M18 19h12M12 29q2 9 12 9t12-9M12 29l-1 5M36 29l1 5" /></g></>],
  ["Finder", <><rect x="4" y="6" width="40" height="32" fill="url(#finder)" stroke="#b8c4e4" /><path d="M25 6h19v32H27l-1-14h-5z" fill="#c8d4f4" opacity=".55" /><path d="M29 2q-6 10-7 22h6q-1 10 2 18" stroke="#111" strokeWidth="2" /><path d="M11 29q12 7 27 0" stroke="#111" strokeWidth="2" /><path d="M15 11v4M32 11v4" stroke="#111" strokeWidth="2" /></>],
  ["Firefox", <><ellipse cx="25" cy="19" rx="18" ry="18" fill="url(#globe)" /><path d="M17 6q5-3 9 0l4 5-3 4M31 8l6 4v7" stroke="#1c4c90" strokeWidth="2" /><path d="M4 9l2-4 3 4q5-1 8 2l3 4q-1 4-5 4l-2 3q3 2 6 2 0 4-4 5 5 5 12 2 8-4 9-12 2-9-2-14 10 6 9 21Q41 43 24 44 7 44 3 30 1 18 4 9z" fill="url(#fox)" /><path d="M9 30q8 10 20 6" stroke="#c84808" strokeWidth="2" opacity=".6" /></>],
  ["Chromium", <><ellipse cx="24" cy="24" rx="21" ry="20" fill="#7fb0e0" /><path d="M6 13Q13 3 25 4t18 11H25L15 27z" fill="#3c6ea4" /><path d="M44 15H26l9 15-10 14q20-2 20-20 0-5-1-9z" fill="#b8d8f2" /><circle cx="24" cy="24" r="8.500" fill="#4f86c0" stroke="#eef6ff" strokeWidth="2.500" /></>],
  ["Correo", <g transform="rotate(-9 24 23)"><rect x="7" y="4" width="34" height="38" fill="#fff" /><rect x="7" y="4" width="34" height="38" stroke="#fff" strokeWidth="3" strokeDasharray="2 2" /><rect x="10" y="7" width="28" height="32" fill="#7ba0e4" /><path d="M22 9q4 1 5 10l6 13-9 1-3-12-5-8z" fill="#5d4632" /><path d="M13 32q10-6 20 2l-8 2z" fill="#4a3a2a" /></g>],
  ["Empathy", <><path d="M4 22q0-8 10-8 12 1 12 11l2 4-3 2q0 3-4 3-2 10-6 9Q4 36 4 22z" fill="#3d6eae" stroke="#24508c" /><path d="M28 22l3-3q1-8 8-8 7 1 6 10-2 13-9 12-5 0-5-8z" fill="#3d6eae" stroke="#24508c" /><g fill="#c8ccd0"><circle cx="12" cy="9" r="1.500" /><circle cx="16" cy="4" r="3" /><circle cx="23" cy="3" r="2.200" /><circle cx="29" cy="5" r="1.700" /></g></>],
  ["iTunes", <><ellipse cx="24" cy="23" rx="21" ry="21" fill="url(#tunes)" stroke="#dfe6f0" strokeWidth="2" /><path d="M19 33V13l14-3v20" stroke="#0c1c34" strokeWidth="3.500" /><ellipse cx="16" cy="33" rx="5" ry="4" fill="#0c1c34" /><ellipse cx="30" cy="31" rx="5" ry="4" fill="#0c1c34" /><path d="M19 14l14-3" stroke="#0c1c34" strokeWidth="5" /></>],
  ["Cheese", <><rect x="3" y="1" width="34" height="43" fill="#aaa" stroke="#555" /><rect x="5" y="5" width="30" height="27" fill="#c80808" /><path d="M9 5v27M14 5v27M19 5v27M24 5v27M29 5v27" stroke="#900000" strokeWidth="1.500" /><path d="M5 32h30v11H5z" fill="#ddd" /><path d="M11 31l-3 12M14 31v12M18 31l3 12" stroke="#221" strokeWidth="2" /><g transform="rotate(20 36 30)"><rect x="30" y="13" width="13" height="33" fill="#fff" /><path d="M32 15h9v8h-9zM32 25h9v8h-9zM32 35h9v8h-9z" fill="#5c342a" /><path d="M35 18h4v4h-4zM35 28h4v4h-4zM35 38h4v4h-4z" fill="#e8b898" /></g></>],
  ["iPhoto", <><rect x="6" y="3" width="31" height="24" fill="#bca888" stroke="#fff" strokeWidth="2" transform="rotate(-10 20 15)" /><rect x="6" y="12" width="30" height="28" fill="#5c92dc" stroke="#fff" strokeWidth="3" transform="rotate(-22 20 26)" /><path d="M14 18q7-2 8 6l8 10-14 3z" fill="#322420" /><circle cx="20" cy="19" r="3.500" fill="#714838" /><circle cx="36" cy="30" r="9" fill="#20242a" stroke="#999" strokeWidth="2" /><circle cx="36" cy="24" r="5.500" fill="#8a98a6" stroke="#eee" strokeWidth="2" /></>],
  ["Shotwell", <><rect x="3" y="4" width="37" height="34" fill="url(#dusk)" stroke="#fff" strokeWidth="2.500" transform="rotate(-7 22 20)" /><path d="M22 15L13 28M22 15l9 12M22 15V9M22 14l-9-3M22 14l9-4M22 15l-9 4M22 15l10 2" stroke="#231006" strokeWidth="2" /><rect x="13" y="24" width="33" height="20" rx="1" fill="#8a9099" stroke="#ccd" /><path d="M14 29h31" stroke="#555" strokeWidth="3" /><circle cx="32" cy="34" r="8" fill="#dfe3e8" stroke="#777" /><circle cx="32" cy="34" r="4.500" fill="#2c3a4c" /></>],
  ["Escáner", <><path d="M2 29L21 10l24 4-16 20z" fill="#d8dadd" stroke="#999" /><path d="M8 27L23 14l18 3-13 14z" fill="#c2c5ca" /><path d="M2 29l1 6 25 6 18-21-1-6-17 20z" fill="#eef0f2" stroke="#999" /><path d="M8 34l14 3" stroke="#333" strokeWidth="2" strokeDasharray="2 2" /><path d="M21 17l6 2" stroke="#68a" /></>],
  ["TextEdit", <><path d="M35 6l8 33-7 3z" fill="#b89858" /><path d="M12 2l25 3-4 38L4 39z" fill="#fbfbfb" stroke="#ccc" /><path d="M12 1l25 3v3L12 5z" fill="#9a5a38" /><path d="M12 17l5-9 2 9M14 14h5" stroke="#33a" strokeWidth="1.500" /><path d="M21 12h12M21 16h11M9 22h22M9 26h8M9 30h8M8 34h18" stroke="#b4b4d4" /><path d="M20 25h11v8H20z" fill="#5aa4c8" /></>],
  ["Calculadora", <><rect x="8" y="2" width="32" height="42" rx="2" fill="#b4b4b4" stroke="#777" /><rect x="10" y="4" width="28" height="5" fill="#cde8a0" /><path d="M11 14h27M11 19h27M11 24h27M11 29h27M11 34h27M11 40h27" stroke="#f0f0f0" strokeWidth="3" strokeDasharray="5 2" /><path d="M11 16h27M11 21h27M11 26h27M11 31h27M11 36h27" stroke="#666" /></>],
  ["Terminal", <><rect x="2" y="4" width="43" height="38" fill="#1a1a1a" stroke="#b4b4b4" strokeWidth="3" /><path d="M8 11l5 3-5 3M14 18h6" stroke="#eee" strokeWidth="1.800" /></>],
  ["Ajustes", <><rect x="2" y="4" width="43" height="38" fill="#6a6a6a" stroke="#d0d0d0" strokeWidth="3" /><circle cx="24" cy="24" r="13" stroke="#ddd" strokeWidth="5" strokeDasharray="3 2" /><circle cx="24" cy="24" r="11" stroke="#ddd" strokeWidth="3" /><path d="M24 24V13M24 24l-9 6M24 24l9 6" stroke="#ddd" strokeWidth="3" /><circle cx="24" cy="24" r="4" fill="#eee" /><path d="M4 32l10 9M44 32l-10 9" stroke="#eee" strokeWidth="5" strokeDasharray="3 2" /></>],
  ["Carpeta", <><path d="M3 8l2-3h10l2 3h27v6H3z" fill="#6a9cc0" /><rect x="1" y="10" width="46" height="31" rx="1" fill="#8fbcdc" stroke="#6a9cc0" /></>],
  ["Biblioteca", <><rect x="2" y="4" width="10" height="38" fill="#6b2416" /><path d="M2 9h10M2 36h10" stroke="#c89848" /><rect x="12" y="10" width="9" height="32" fill="#2c4c54" /><rect x="21" y="10" width="6" height="32" fill="#3a2c20" /><path d="M26 3l6-1 6 38-7 2z" fill="#c89c58" stroke="#5a3c18" /><path d="M33 15l6-1 8 26-7 2z" fill="#3a72d0" stroke="#1c3c80" /></>],
  ["Google Earth", <><ellipse cx="24" cy="22" rx="22" ry="21" fill="url(#earth)" /><path d="M5 13q14 16 38 21 2-4 3-8Q22 22 9 7zM17 3q8 12 28 16-1-7-4-10-11-1-19-7zM3 26q14 14 31 15l3-2Q18 36 3 22z" fill="#fff" /></>],
  ["Qucs", <><path d="M13 9h12q18 1 18 14T25 37H13M4 9h6M4 37h6" stroke="#3a4040" strokeWidth="6" /><path d="M13 9h12q18 1 18 14T25 37H13M4 9h6M4 37h6" stroke="#8c9494" strokeWidth="3" /><path d="M12 12v30" stroke="#3a4040" strokeWidth="5" /><path d="M12 12v30" stroke="#8c9494" strokeWidth="2" /><rect x="7" y="2" width="10" height="10" fill="#6ed018" stroke="#388008" /><path d="M25 14l8 15H17zM25 20l3 6h-6z" stroke="#e86818" strokeWidth="2.500" fill="#fbb" fillOpacity=".5" /></>],
  ["Copias", <><path d="M9 11h28l8 20v11H2V31z" fill="#d6d8da" stroke="#888" /><rect x="3" y="31" width="41" height="11" rx="1" fill="#b0b2b4" stroke="#888" /><path d="M28 36h12" stroke="#eee" strokeWidth="5" strokeDasharray="1.500 1" /><path d="M10 12q4-12 18-9l6 1V1l2 13-13-3 4-2q-8-2-10 5zM34 18q-4 12-18 9l-6-2v3L9 16l12 2-4 2q8 3 12-4z" fill="#5a92d0" stroke="#2a5c9c" /></>],
  ["TeamViewer", <><path d="M5 3l29 1 6 2v37l-6 1L5 38z" fill="#1186e8" /><path d="M34 4l6 2v37l-6 1z" fill="#0a54a0" /><ellipse cx="20" cy="22" rx="13" ry="15" fill="#eef6fc" /><path d="M8 22l7-6v4h10v-3l7 6-7 6v-4H15v4z" fill="#1272c8" /></>],
  ["KiCad", <><rect x="7" y="2" width="32" height="42" fill="#f0a058" /><path d="M11 2v42M19 2v42M28 2v42M35 2v42" stroke="#5a3c28" strokeWidth="2" /><path d="M5 8h10M30 9h10M5 34h8M30 36h10M32 20l14 5M30 26l12 8" stroke="#b8a090" strokeWidth="3" /><path d="M7 18l17-8 11 7-4 15-14 6-10-9z" fill="#7a74c4" stroke="#4c4690" /><path d="M7 18l12 6 16-7M19 24l-2 14" stroke="#9c98dc" /></>],
  ["Actualizaciones", <><circle cx="24" cy="24" r="13" fill="url(#globe)" /><path d="M14 18l8 4 9-5M17 30l6-8 8 9M24 12l-2 10" stroke="#cfe8ff" /><path d="M15 4Q-4 18 9 40M33 5q20 14 2 36" stroke="#4a72b0" strokeWidth="4" /><path d="M8 8l8-5v9zM34 33v9l9-2z" fill="#4a72b0" /></>],
];

const TrashArt = () => (
  <>
    <path d="M9 6l5 34q10 5 20 0l5-34z" fill="#3c3c3c" opacity=".85" />
    <path d="M10 10l22 32M12 22l15 21M18 8l18 27M27 8l11 16M38 10L16 42M36 22L21 43M30 8L13 34M21 8l-9 15" stroke="#a8a8a8" strokeWidth=".8" />
    <ellipse cx="24" cy="7" rx="15" ry="4.500" fill="#4a3228" stroke="#d0d0d0" strokeWidth="1.500" />
    <path d="M14 37q10 5 20 0v4q-10 5-20 0z" fill="#c8c8c8" stroke="#777" />
  </>
);

const blobs: [number, number, number, number, string][] = [
  [30, 14, 40, 20, "#33220f"], [60, 50, 18, 26, "#4a3a24"], [148, 20, 24, 26, "#d8b890"], [175, 54, 50, 12, "#7a5030"],
  [222, 40, 14, 50, "#8a5e38"], [265, 44, 16, 40, "#6a4428"], [345, 20, 26, 30, "#54301a"], [400, 30, 34, 40, "#8a5432"],
  [455, 60, 50, 30, "#b08058"], [500, 14, 36, 20, "#d8b4a0"], [560, 50, 60, 30, "#8a5a48"], [640, 20, 34, 40, "#d0a090"],
  [690, 60, 60, 30, "#94604c"], [740, 14, 30, 24, "#d8b4a0"], [800, 34, 30, 40, "#9a6040"], [850, 60, 30, 26, "#4a2818"],
];

const goldBlobs: [number, number, number, number, string][] = [
  [1640, 20, 50, 40, "#c89858"], [1600, 60, 30, 20, "#5a3818"], [1700, 60, 40, 26, "#8a5c28"], [1750, 14, 30, 24, "#7c5020"],
  [1790, 50, 24, 40, "#241408"], [1845, 20, 34, 30, "#8a6a34"], [1900, 50, 34, 30, "#6a4a20"],
];

const Wallpaper = () => (
  <Scene viewBox="0 0 1920 72" preserveAspectRatio="none" aria-hidden="true">
    <defs>
      <filter id="soft" x="-30%" y="-60%" width="160%" height="220%"><feGaussianBlur stdDeviation="10" /></filter>
      <filter id="edge" x="-10%" y="-20%" width="120%" height="140%"><feGaussianBlur stdDeviation="2" /></filter>
      <linearGradient id="blueBox" x2="0" y2="1"><stop stopColor="#4ea0dc" /><stop offset="1" stopColor="#1c5cac" /></linearGradient>
      <linearGradient id="finder" x2="0" y2="1"><stop stopColor="#e4ecfc" /><stop offset="1" stopColor="#4c70c8" /></linearGradient>
      <radialGradient id="globe"><stop stopColor="#8cd4f8" /><stop offset="1" stopColor="#144c98" /></radialGradient>
      <linearGradient id="fox" x2="1" y2="0"><stop stopColor="#e85c10" /><stop offset=".7" stopColor="#f88c18" /><stop offset="1" stopColor="#f8d838" /></linearGradient>
      <linearGradient id="tunes" x2="0" y2="1"><stop stopColor="#78b4e8" /><stop offset=".5" stopColor="#1468d0" /><stop offset="1" stopColor="#30d0ff" /></linearGradient>
      <linearGradient id="dusk" x2="0" y2="1"><stop stopColor="#7c2c08" /><stop offset=".6" stopColor="#f08c18" /><stop offset="1" stopColor="#fcc040" /></linearGradient>
      <radialGradient id="earth" cx=".4" cy=".35"><stop stopColor="#5c94f0" /><stop offset="1" stopColor="#1238a0" /></radialGradient>
    </defs>
    <rect width="1920" height="72" fill="#120a08" />
    <g filter="url(#soft)">
      {blobs.map(([x, y, rx, ry, c]) => <ellipse key={x} cx={x} cy={y} rx={rx} ry={ry} fill={c} />)}
    </g>
    <g filter="url(#edge)">
      <path d="M1000 72L1010 0H1165Q1200 24 1215 72z" fill="#c09a70" />
      <path d="M1252 72L1256 0H1325Q1360 24 1385 72z" fill="#c8a47c" />
      <path d="M1405 72Q1420 20 1435 0H1600L1620 72z" fill="#b88c60" />
      <path d="M1040 40q50-30 120 0M1270 20q40 6 70 40M1450 20q60 10 100 46" stroke="#e0c098" strokeWidth="6" fill="none" opacity=".4" />
    </g>
    <path d="M1600 0H1920V72H1620z" fill="#6a481e" />
    <g filter="url(#soft)">
      {goldBlobs.map(([x, y, rx, ry, c]) => <ellipse key={x} cx={x} cy={y} rx={rx} ry={ry} fill={c} />)}
    </g>
    <path d="M339 31.500H1581L1597 72H321z" fill="#d8d4d4" fillOpacity=".26" />
    <path d="M321 72L339 31.500H1581L1597 72" fill="none" stroke="#fff" strokeOpacity=".55" />
  </Scene>
);

/* ---------- parts ---------- */

const Combo = ({ label, value, w }: { label: string; value: string; w: number }) => (
  <ComboWrap $w={w}>
    <ComboSelect aria-label={label}><option>{value}</option></ComboSelect>
    <Stepper>
      <svg width="8" height="12" viewBox="0 0 8 12" aria-hidden="true"><path d="M4 0l3 4H1zM4 12l3-4H1z" fill="#0a1430" /></svg>
    </Stepper>
  </ComboWrap>
);

const CheckOption = ({ text, on, off, h = 21 }: { text: string; on?: boolean; off?: boolean; h?: number }) => (
  <Option $h={h} $off={off}><Check type="checkbox" defaultChecked={on} disabled={off} />{text}</Option>
);

type RadioGroupProps = { title: string; items: string[]; value: string; w: number; off?: boolean; gap?: number };

const RadioGroup = ({ title, items, value, w, off, gap }: RadioGroupProps) => (
  <Group $w={w} $off={off} $gap={gap} disabled={off}>
    <legend>{title}</legend>
    {items.map((t) => (
      <Option key={t} $h={22} $off={off}>
        <Radio type="radio" name={title} defaultChecked={t === value} />{t}
      </Option>
    ))}
  </Group>
);

const TextField = ({ label, value, w, off }: { label: string; value: string; w: number; off?: boolean }) => (
  <Field $w={w} $off={off}>{label}<input type="text" defaultValue={value} disabled={off} /></Field>
);

const layersA = ["Cobre", ...Array.from({ length: 14 }, (_, i) => `Interna_${i + 1}`), "Comp."];
const layersB = ["Adhes_Cu", "Adhes__Cmp", "SoldP_Cu", "SoldP_Cmp", "Serigr_Cu", "Serigr_Cmp", "Máscara_Cu", "Máscara_Cmp", "Dibujos", "Comentarios", "Eco1", "Eco2", "Contorno_Pcb"];
const enabled = ["Cobre", "Comp.", "Serigr_Cu"];

const stats: [string, string, string][] = [
  ["Isletas", "216", "#005000"], ["Vias", "0", "#005000"], ["Nodos", "128", "#004858"], ["Enlaces", "83", "#005000"],
  ["Redes", "46", "#b00000"], ["Conectado", "83", "#005000"], ["Desconectado", "0", "#0000c0"],
];

const tri = { up: "M4 1l3 6H1z", down: "M4 7l3-6H1z", left: "M1 4l6-3v6z", right: "M7 4L1 1v6z" };
const ScrollArrow = ({ dir, label }: { dir: keyof typeof tri; label: string }) => (
  <ArrowButton aria-label={label}><svg width="8" height="8" viewBox="0 0 8 8"><path d={tri[dir]} fill="#333" /></svg></ArrowButton>
);

export default function App() {
  return (
    <Desktop>
      <GlobalStyle />
      <MenuBar>
        <svg width="20" height="22" viewBox="0 0 20 22" aria-hidden="true">
          <path d="M14 1q0 4-4 5 0-4 4-5zM10 7q1 0 3-1 3 0 5 3-3 2-2 5 0 3 3 4-2 4-4 4-2-1-4-1-2 1-3 1Q4 22 2 15q-1-8 5-9 1 0 3 1z" fill="#333" />
        </svg>
        <Menus>
          <MenuItem $bold>pcbnew</MenuItem>
          <MenuItem><u>A</u>rchivo</MenuItem>
          <MenuItem>P<u>r</u>eferencias</MenuItem>
          <MenuItem><u>D</u>imensiones</MenuItem>
          <MenuItem><u>M</u>iscelánea</MenuItem>
          <MenuItem>P<u>o</u>stprocesadores</MenuItem>
          <MenuItem>Visualización <u>3</u>D</MenuItem>
          <MenuItem>A<u>y</u>uda</MenuItem>
        </Menus>
        <Tray>
          <svg width="22" height="18" viewBox="0 0 22 18" fill="none" aria-hidden="true">
            <path d="M1 6q10-9 20 0M4 10q7-6 14 0" stroke="#d0d0d0" strokeWidth="2" />
            <path d="M7 12q4-4 8 0" stroke="#111" strokeWidth="2" /><circle cx="11" cy="15" r="1.800" fill="#111" />
          </svg>
          <svg width="18" height="18" viewBox="0 0 18 18" aria-hidden="true">
            <path d="M5 1l4 3 4-3 4 3-3 3 3 3-2 3-6 5-6-5-2-3 3-3-3-3z" fill="#2a2a2a" /><path d="M6 9q3 5 6-1l-3-2" fill="none" stroke="#ccc" strokeWidth="1.500" />
          </svg>
          <svg width="18" height="16" viewBox="0 0 18 16" fill="none" aria-hidden="true">
            <path d="M0 5h3l4-4v14l-4-4H0z" fill="#222" /><path d="M9 5q2 3 0 6M12 3q3 5 0 10M15 1q4 7 0 14" stroke="#888" strokeWidth="1.300" />
          </svg>
          <svg width="18" height="13" viewBox="0 0 18 13" fill="none" aria-hidden="true">
            <rect width="18" height="13" rx="1" fill="#8c8c8c" /><path d="M1 1l8 7 8-7M1 12l6-5M17 12l-6-5" stroke="#bbb" />
          </svg>
          <Clock>lun 23 de abr, 09:16</Clock>
          <svg width="17" height="18" viewBox="0 0 17 18" fill="none" aria-hidden="true">
            <circle cx="7" cy="7" r="5.500" stroke="#111" strokeWidth="2.500" /><path d="M11 11l5 6" stroke="#111" strokeWidth="3" />
          </svg>
        </Tray>
      </MenuBar>

      <AppWindow>
        <TitleBar>
          <Lights $w={72}>
            <Light aria-label="Cerrar" /><Light aria-label="Minimizar" /><Light aria-label="Maximizar" />
          </Lights>
          <TitleText><PcbIcon faded />/home/kamaxeon/Prog/Arduino/ardutino/src/Kicad/ardutino2.brd</TitleText>
          <PillBox><Pill aria-label="Barras" /></PillBox>
        </TitleBar>
        <Strip />
        <ToolRow role="toolbar">
          {mainIcons.map(([n, i]) => <ToolButton key={n} aria-label={n}>{i}</ToolButton>)}
          <Combo label="Capa" value="Cobre (Page Up)" w={228} />
          {modeIcons.map(([n, i]) => <ToolButton key={n} aria-label={n}>{i}</ToolButton>)}
        </ToolRow>
        <ToolRow role="toolbar">
          <Combo label="Pista" value="Pista 25,0" w={158} />
          <ToolButton aria-label="Ancho automático"><TrackIcon /></ToolButton>
          <Combo label="Via" value="Via 45,0" w={148} />
          <Combo label="Rejilla" value="Rejilla 50,0" w={138} />
          <Combo label="Zoom" value="Zoom 15" w={138} />
        </ToolRow>
        <Workspace>
          <SideBar $w={28}>
            {leftIcons.map(([n, i, s]) => <SideButton key={n} $h={26} $state={s} aria-label={n}>{i}</SideButton>)}
          </SideBar>
          <Center>
            <Row $grow>
              <Canvas><Board /></Canvas>
              <VBar>
                <VTrack><VThumb /></VTrack>
                <ScrollArrow dir="up" label="Subir" />
                <ScrollArrow dir="down" label="Bajar" />
              </VBar>
            </Row>
            <Row>
              <HBar>
                <HTrack><HThumb /></HTrack>
                <ScrollArrow dir="left" label="Izquierda" />
                <ScrollArrow dir="right" label="Derecha" />
              </HBar>
              <Corner />
            </Row>
          </Center>
          <SideBar $w={22}>
            {rightIcons.map(([n, i, s]) => <SideButton key={n} $h={18} $state={s} aria-label={n}>{i}</SideButton>)}
          </SideBar>
        </Workspace>
        <Stats>
          {stats.map(([k, v, c]) => <Stat key={k} $c={c}><dt>{k}</dt><dd>{v}</dd></Stat>)}
        </Stats>
        <StatusBar>
          <StatusField />
          <StatusField $w={58}>Z 102</StatusField>
          <StatusField $w={137}>X 0,9000  Y -0,1500</StatusField>
          <StatusField $w={137}>x 0,9000  y -0,1500</StatusField>
          <StatusField $w={47}>Inch</StatusField>
          <StatusField $w={96}>
            <span />
            <svg width="21" height="20" viewBox="0 0 21 20" stroke="#888" aria-hidden="true"><path d="M1 20L20 1M6 20L20 6M11 20l9-9M16 20l4-4" /></svg>
          </StatusField>
        </StatusBar>
      </AppWindow>

      <DockArea>
        <Wallpaper />
        <DockRow>
          {dockIcons.map(([n, i]) => <DockItem key={n} aria-label={n}><DockSvg>{i}</DockSvg></DockItem>)}
          <DockGap><i /><i /><i /></DockGap>
          <DockItem aria-label="Papelera"><DockSvg><TrashArt /></DockSvg></DockItem>
        </DockRow>
      </DockArea>

      <Dialog role="dialog" aria-label="Trazar">
        <TitleBar $active>
          <Lights $w={32}><Light $red type="button" aria-label="Cerrar" /></Lights>
          <TitleText as="h2"><PcbIcon />Trazar</TitleText>
          <PillBox><Pill type="button" aria-label="Barras" /></PillBox>
        </TitleBar>
        <DialogBody onSubmit={(e) => e.preventDefault()}>
          <Column $top={2}>
            <Layers>
              <div>{layersA.map((t) => <CheckOption key={t} text={t} on={enabled.includes(t)} />)}</div>
              <div>{layersB.map((t) => <CheckOption key={t} text={t} on={enabled.includes(t)} />)}</div>
            </Layers>
            <CheckOption text="Excluir capa contorno de placa" />
            <CheckOption text="Imprimir cajetín" off />
            <CheckOption text="Isletas (Pads) en Serigrafía" on />
            <CheckOption text="Imprimir Isletas (Pads) siempre" on />
            <CheckOption text="Imprimir Valor Módulo" on />
            <CheckOption text="Imprimir Referencia Módulo" on />
            <CheckOption text="Imprimir otros textos del Módulo" on />
            <CheckOption text="Forzar impresión Textos invisibles" />
          </Column>
          <Column>
            <RadioGroup off w={142} gap={13} title="Taladrado de Isletas" items={["Sin marcas", "Marca pequeña", "Taladro real"]} value="Marca pequeña" />
            <RadioGroup off w={142} gap={13} title="Escala" items={["Escala auto", "Escala 1", "Escala 1,5", "Escala 2", "Escala 3"]} value="Escala 1" />
            <RadioGroup off w={142} gap={6} title="Modo de Trazado" items={["Linea", "Relleno", "Contorno"]} value="Relleno" />
            <CheckOption text="Trazado espejo" off h={29} />
            <CheckOption text="Vias en máscara" h={29} />
            <CheckOption text="Org = Centro" off h={29} />
          </Column>
          <Column>
            <RadioGroup w={170} title="Formato Trazado" items={["HPGL", "Gerber", "Postscript", "Postscript A4"]} value="Gerber" />
            <Group $w={170} $off $gap={11} disabled>
              <legend>Opciones HPGL :</legend>
              <FieldStack $pad>
                <TextField off w={150} label={'Diam pluma ("):'} value="0,015" />
                <TextField off w={150} label="Velocidad pluma (cm/s)" value="20" />
                <TextField off w={150} label={'Recubrimiento ("):'} value="0,002" />
              </FieldStack>
            </Group>
            <TextField w={170} label={'Espesor líneas ("):'} value="0,0010" />
          </Column>
          <Column>
            <RadioGroup w={146} title="Origen coordenadas:" items={["Absoluto", "Eje Auxiliar"]} value="Absoluto" />
            <Column $top={43}>
              <FieldStack>
                <TextField off w={145} label="Ajustar Escala X" value="1,000000" />
                <TextField off w={145} label="Ajustar Escala Y" value="1,000000" />
                <CheckOption text="Trazar en negativo" off h={20} />
              </FieldStack>
              <Actions>
                <Push $c="#f00000">Trazar</Push>
                <Push $c="#005000" type="button">Guardar opciones</Push>
                <Push $c="#005058" type="button">Generate drill file</Push>
                <Push $c="#0000f0" type="button">Cerrar</Push>
              </Actions>
            </Column>
          </Column>
        </DialogBody>
      </Dialog>
      <Pointer viewBox="0 0 13 20" aria-hidden="true">
        <path d="M1 1v14l3-3 3 6 3-1-3-6h5z" fill="#000" stroke="#fff" strokeWidth="1" />
      </Pointer>
    </Desktop>
  );
}
